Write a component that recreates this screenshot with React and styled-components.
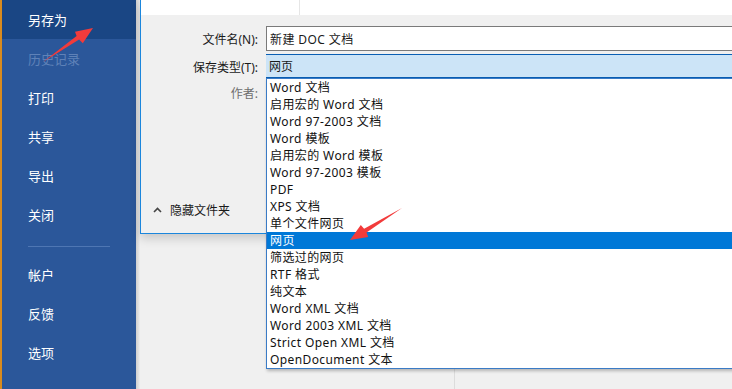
import React from 'react'
import styled, { createGlobalStyle } from 'styled-components'

const GlobalStyle = createGlobalStyle`
  html, body {
    margin: 0;
    padding: 0;
    overflow: hidden;
    background: #f0f0f0;
  }
  * {
    box-sizing: border-box;
  }
`

const Page = styled.div`
  position: relative;
  display: flex;
  width: 732px;
  height: 389px;
  overflow: hidden;
  font-family: "Noto Sans", "Noto Sans CJK SC", sans-serif;
`

const Sidebar = styled.nav`
  width: 136px;
  flex-shrink: 0;
  display: flex;
  flex-direction: column;
  background: #2b579a;
  border-left: 2px solid #d98b1e;
`

const NavItem = styled.div`
  height: 39px;
  display: flex;
  align-items: center;
  padding-left: 26px;
  font-size: 13px;
  color: ${(p) => (p.disabled ? '#5f82b8' : '#ffffff')};
  background: ${(p) => (p.active ? '#1a4684' : 'transparent')};
`

const Separator = styled.div`
  height: 1px;
  margin: 12px 26px 8px 26px;
  background: #4e76b3;
`

const Main = styled.main`
  position: relative;
  flex: 1;
  display: flex;
  flex-direction: column;
  background: linear-gradient(to right, #cfcfcf 0px, #e4e4e4 3px, #f0f0f0 4px);
  padding-left: 4px;
`

const Dialog = styled.section`
  height: 234px;
  display: flex;
  flex-direction: column;
  background: #f0f0f0;
  border-left: 1px solid #1b86dc;
  border-bottom: 1px solid #1b86dc;
  box-shadow: 0 4px 10px rgba(0, 0, 0, 0.18);
`

const TopStrip = styled.div`
  height: 15px;
  display: flex;
  background: #ffffff;
`

const TopCell = styled.div`
  width: 159px;
  border-right: 1px solid #e6e6e6;
`

const Form = styled.div`
  display: grid;
  grid-template-columns: 117px 1fr;
  column-gap: 8px;
  row-gap: 3px;
  padding-top: 11px;
  font-size: 12px;
  color: #1a1a1a;
`

const Label = styled.div`
  display: flex;
  align-items: center;
  justify-content: flex-end;
  color: ${(p) => (p.muted ? '#6e6e6e' : '#1a1a1a')};
  height: ${(p) => (p.short ? '22px' : '25px')};
`

const Input = styled.div`
  height: 25px;
  display: flex;
  align-items: center;
  padding-left: 3px;
  letter-spacing: 0.4px;
  background: #ffffff;
  border: 1px solid #7a7a7a;
  border-right: none;
`

const Select = styled.div`
  height: 25px;
  display: flex;
  align-items: center;
  padding-left: 3px;
  background: #cce4f7;
  border-top: 1px solid #0a5fb4;
  border-bottom: 2px solid #0a5fb4;
`

const Spacer = styled.div`
  flex: 1;
`

const FolderToggle = styled.div`
  display: flex;
  align-items: center;
  gap: 8px;
  height: 18px;
  margin: 0 0 14px 12px;
  font-size: 12px;
  color: #1a1a1a;
`

const Backstage = styled.div`
  flex: 1;
  display: flex;
`

const BackCell = styled.div`
  width: 315px;
  border-right: 1px solid #dcdcdc;
`

const Dropdown = styled.ul`
  position: absolute;
  left: 130px;
  top: 78px;
  width: 480px;
  height: 291px;
  margin: 0;
  padding: 0;
  list-style: none;
  background: #ffffff;
  border: 1px solid #3a7bc6;
  box-shadow: 1px 2px 3px rgba(0, 0, 0, 0.25);
  font-size: 12px;
  letter-spacing: 0.4px;
`

const Option = styled.li`
  height: 17px;
  line-height: 17px;
  padding-left: 3px;
  white-space: nowrap;
  color: ${(p) => (p.selected ? '#ffffff' : '#111111')};
  background: ${(p) => (p.selected ? '#0078d7' : 'transparent')};
`

const Overlay = styled.svg`
  position: absolute;
  left: 0;
  top: 0;
  pointer-events: none;
`

const navTop = [
  { label: '另存为', active: true },
  { label: '历史记录', disabled: true },
  { label: '打印' },
  { label: '共享' },
  { label: '导出' },
  { label: '关闭' },
]

const navBottom = ['帐户', '反馈', '选项']

const fileTypes = [
  'Word 文档',
  '启用宏的 Word 文档',
  'Word 97-2003 文档',
  'Word 模板',
  '启用宏的 Word 模板',
  'Word 97-2003 模板',
  'PDF',
  'XPS 文档',
  '单个文件网页',
  '网页',
  '筛选过的网页',
  'RTF 格式',
  '纯文本',
  'Word XML 文档',
  'Word 2003 XML 文档',
  'Strict Open XML 文档',
  'OpenDocument 文本',
]

const ChevronUp = () => (
  <svg width="9" height="6" viewBox="0 0 9 6">
    <path d="M1 5 L4.5 1.5 L8 5" fill="none" stroke="#444" strokeWidth="1.6" />
  </svg>
)

const App = () => {
  return (
    <Page>
      <GlobalStyle />
      <Sidebar>
        {navTop.map((item) => (
          <NavItem key={item.label} active={item.active} disabled={item.disabled}>
            {item.label}
          </NavItem>
        ))}
        <Separator />
        {navBottom.map((label) => (
          <NavItem key={label}>{label}</NavItem>
        ))}
      </Sidebar>

      <Main>
        <Dialog>
          <TopStrip>
            <TopCell />
          </TopStrip>
          <Form>
            <Label>文件名(N):</Label>
            <Input>新建 DOC 文档</Input>
            <Label>保存类型(T):</Label>
            <Select>网页</Select>
            <Label muted short>作者:</Label>
            <div />
          </Form>
          <Spacer />
          <FolderToggle>
            <ChevronUp />
            隐藏文件夹
          </FolderToggle>
        </Dialog>
        <Backstage>
          <BackCell />
        </Backstage>

        <Dropdown>
          {fileTypes.map((t) => (
            <Option key={t} selected={t === '网页'}>
              {t}
            </Option>
          ))}
        </Dropdown>
      </Main>

      <Overlay width="732" height="389">
        <polygon
          points="43,62 79.1,39.6 82.8,43.3 93,28 75,31.7 76.6,35.9"
          fill="#f23b3b"
        />
        <polygon
          points="402,208 364.1,228.7 360.8,225.1 350,240 368.2,237.1 366.5,232.5"
          fill="#f23b3b"
        />
      </Overlay>
    </Page>
  )
}

export default App
